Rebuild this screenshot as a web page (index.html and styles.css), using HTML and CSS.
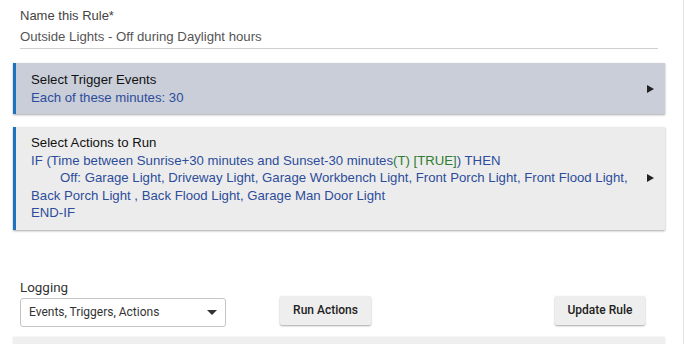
FILE: index.html
```html
<!DOCTYPE html>
<html>
<head>
<meta charset="utf-8">
<link rel="stylesheet" href="styles.css">
</head>
<body>
<div class="page">
  <div class="name-field">
    <div class="name-label">Name this Rule*</div>
    <div class="name-value">Outside Lights - Off during Daylight hours</div>
  </div>

  <div class="card card-trigger">
    <div class="card-body">
      <div class="card-title">Select Trigger Events</div>
      <div class="blue">Each of these minutes: 30</div>
    </div>
    <svg class="arrow" width="7" height="8" viewBox="0 0 7 8"><path d="M0 0 L7 4 L0 8 Z" fill="#222"/></svg>
  </div>

  <div class="card card-actions">
    <div class="card-body">
      <div class="card-title">Select Actions to Run</div>
      <div class="blue">IF (Time between Sunrise+30 minutes and Sunset-30 minutes<span class="green">(T)</span> <span class="green">[TRUE]</span>) THEN</div>
      <div class="blue indent">Off: Garage Light, Driveway Light, Garage Workbench Light, Front Porch Light, Front Flood Light,</div>
      <div class="blue">Back Porch Light , Back Flood Light, Garage Man Door Light</div>
      <div class="blue">END-IF</div>
    </div>
    <svg class="arrow" width="7" height="8" viewBox="0 0 7 8"><path d="M0 0 L7 4 L0 8 Z" fill="#222"/></svg>
  </div>

  <div class="controls">
    <div class="logging">
      <div class="logging-label">Logging</div>
      <div class="select">
        <span>Events, Triggers, Actions</span>
        <svg width="10" height="5" viewBox="0 0 10 5"><path d="M0 0 L10 0 L5 5 Z" fill="#333"/></svg>
      </div>
    </div>
    <button class="btn btn-run">Run Actions</button>
    <button class="btn btn-update">Update Rule</button>
  </div>

  <div class="card card-bottom"></div>
</div>
</body>
</html>
```

FILE: styles.css
```css
html, body {
  margin: 0;
  padding: 0;
  background: #fff;
}
.page {
  width: 683px;
  height: 344px;
  border-right: 1px solid #e4e4e4;
  overflow: hidden;
  font-family: "Liberation Sans", Arial, sans-serif;
  font-size: 13.2px;
}
.name-field {
  margin: 0 25px 0 20px;
  padding-top: 6px;
  padding-bottom: 1px;
  border-bottom: 1px solid #cfcfcf;
  color: #555;
}
.name-label {
  line-height: 20px;
  font-size: 13px;
  color: #444;
}
.name-value {
  line-height: 21px;
  font-size: 13.2px;
}
.card {
  display: flex;
  align-items: center;
  margin: 14px 18px 0 13px;
  border-left: 3px solid #1e73be;
  box-shadow: 0 1px 2px rgba(0, 0, 0, 0.35);
}
.card-body {
  flex: 1;
  padding-left: 15px;
}
.card-trigger {
  background: #c9ced9;
  padding: 8px 0 8px 0;
}
.card-actions {
  background: #ececec;
  margin-top: 13px;
  padding: 7px 0 8px 0;
}
.card-title {
  color: #111;
  line-height: 17.5px;
}
.blue {
  color: #2d4c9b;
  line-height: 17.5px;
}
.green {
  color: #2e7d32;
}
.indent {
  padding-left: 29px;
}
.arrow {
  margin-right: 11px;
  margin-left: 10px;
}
.controls {
  display: flex;
  align-items: flex-end;
  margin: 50px 0 0 20px;
}
.logging {
  width: 206px;
}
.logging-label {
  font-family: Roboto, sans-serif;
  font-size: 13.4px;
  color: #333;
  line-height: 16px;
  margin-bottom: 2px;
}
.select {
  display: flex;
  align-items: center;
  justify-content: space-between;
  height: 29px;
  box-sizing: border-box;
  border: 1px solid #c4c4c4;
  border-radius: 3px;
  padding: 0 8px 0 8px;
  font-family: Roboto, sans-serif;
  font-size: 12px;
  color: #333;
}
.btn {
  font-family: Roboto, sans-serif;
  font-size: 12px;
  font-weight: 500;
  color: #222;
  background: #eeeeee;
  border: none;
  border-radius: 2px;
  height: 29px;
  padding: 0;
  box-shadow: 0 1px 2px rgba(0, 0, 0, 0.35);
  margin-bottom: 2px;
}
.btn-run {
  width: 91px;
  margin-left: 54px;
}
.btn-update {
  width: 90px;
  margin-left: 184px;
}
.card-bottom {
  background: #efefef;
  border-left: none;
  box-shadow: 0 0 2px rgba(0, 0, 0, 0.1);
  height: 20px;
  margin-top: 10px;
}
```
